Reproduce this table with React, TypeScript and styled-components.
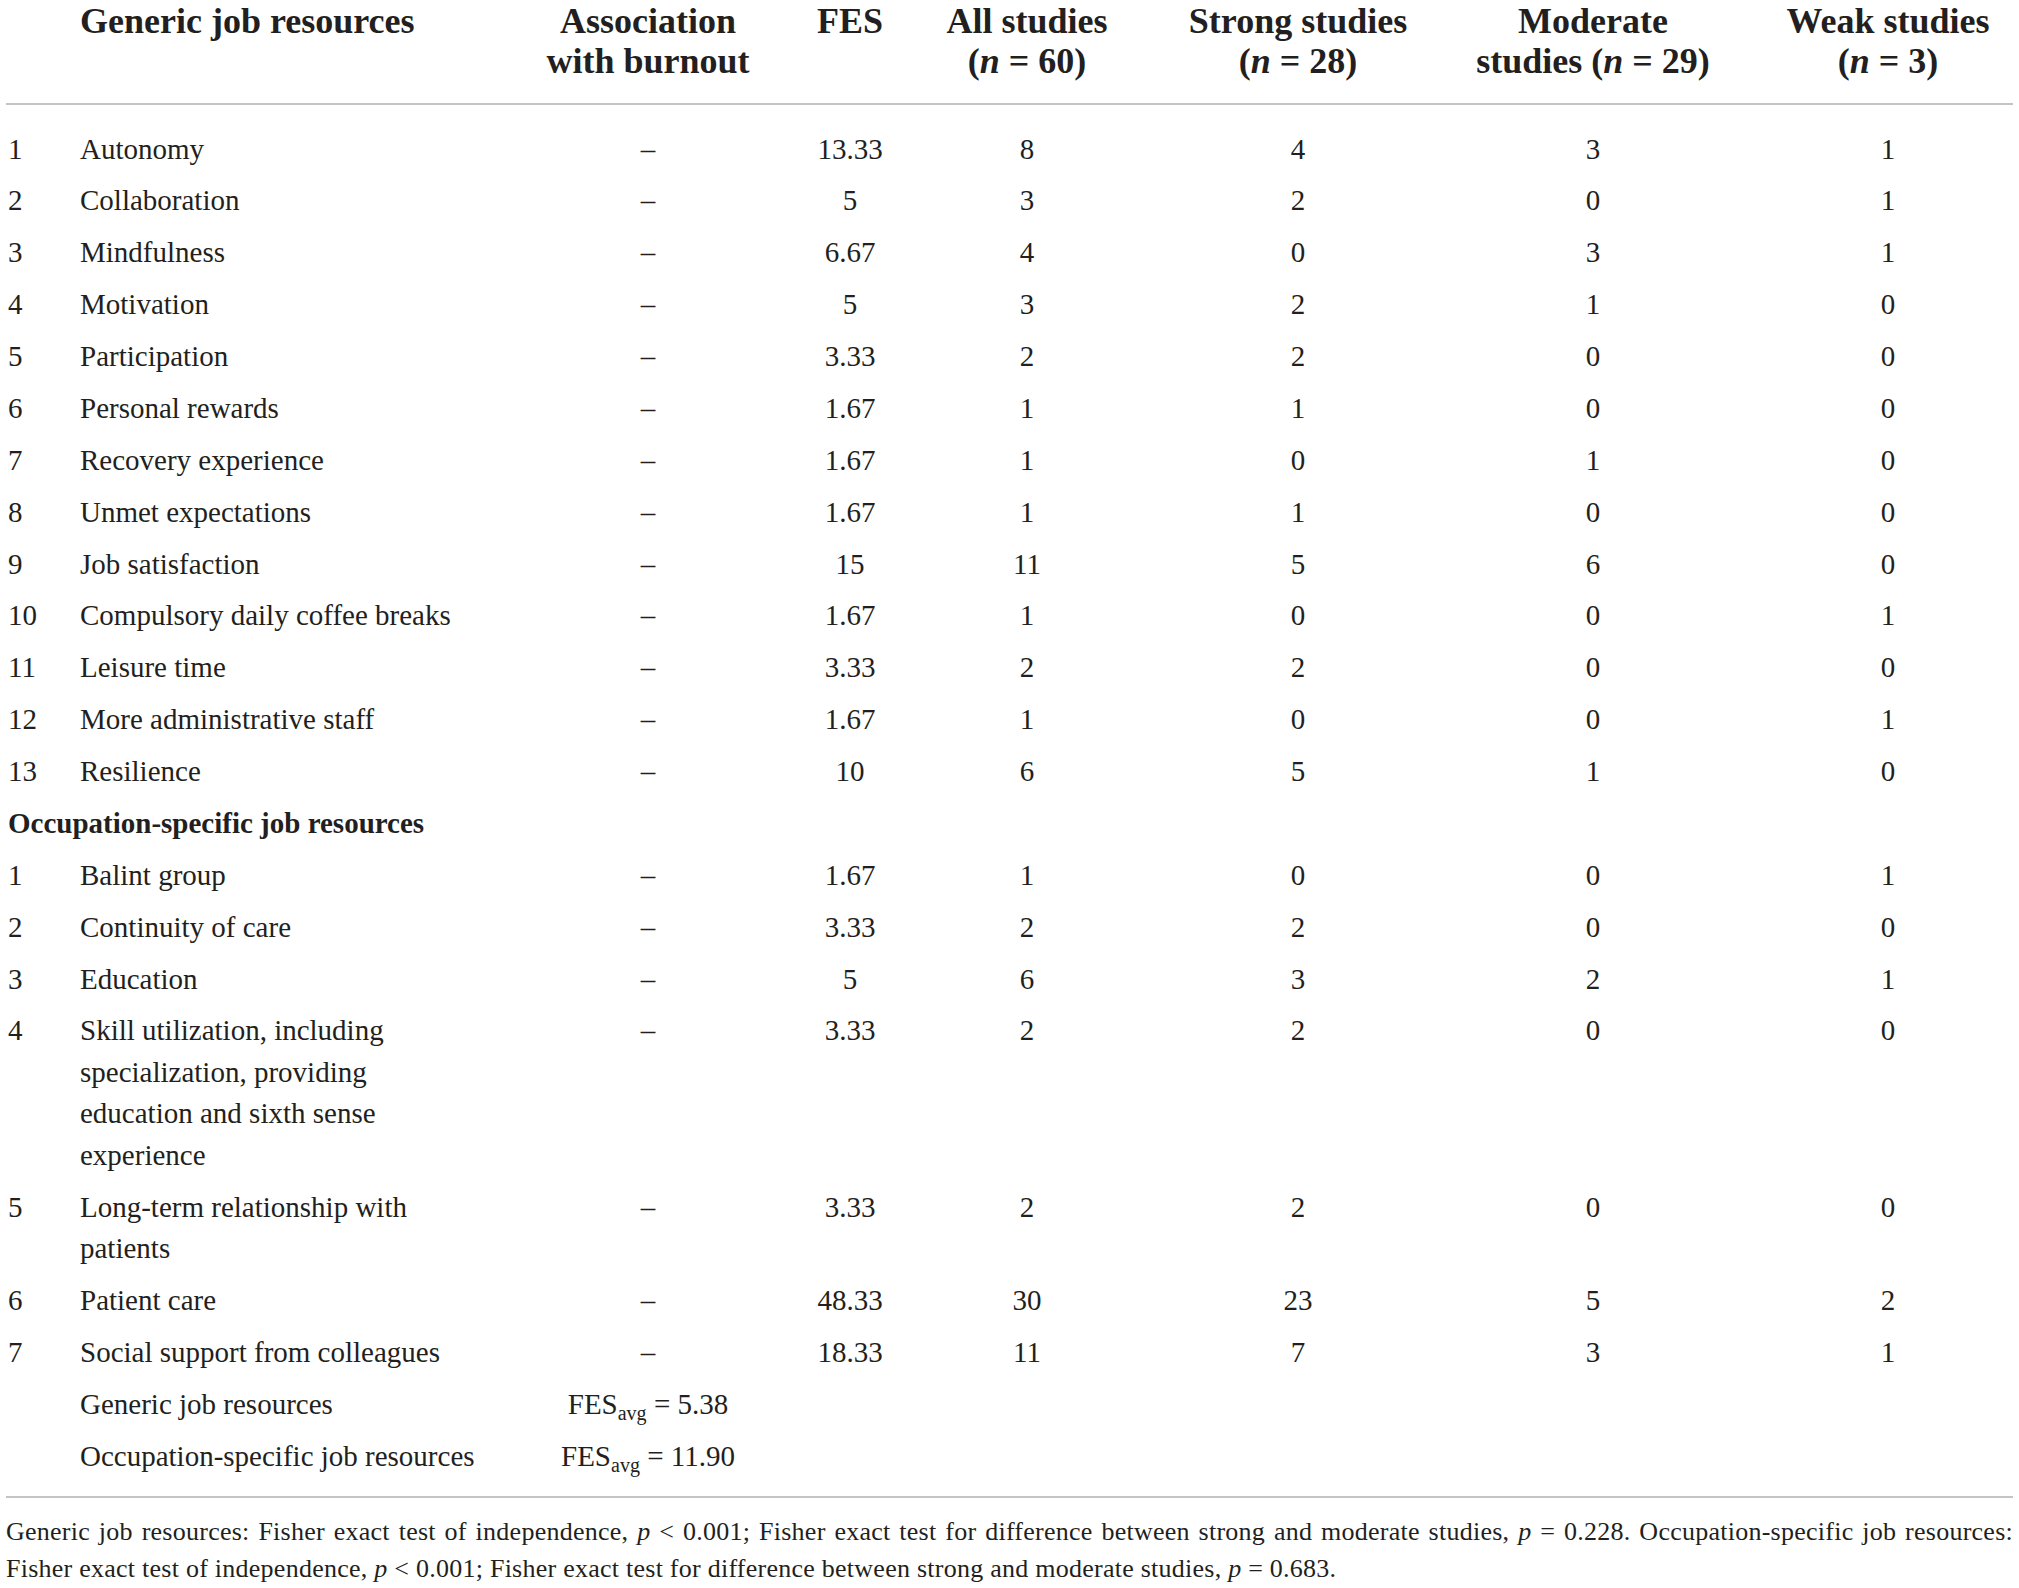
import React from "react";
import styled, { createGlobalStyle } from "styled-components";

type Resource = {
  name: string;
  fes: string;
  counts: number[];
};

const genericResources: Resource[] = [
  { name: "Autonomy", fes: "13.33", counts: [8, 4, 3, 1] },
  { name: "Collaboration", fes: "5", counts: [3, 2, 0, 1] },
  { name: "Mindfulness", fes: "6.67", counts: [4, 0, 3, 1] },
  { name: "Motivation", fes: "5", counts: [3, 2, 1, 0] },
  { name: "Participation", fes: "3.33", counts: [2, 2, 0, 0] },
  { name: "Personal rewards", fes: "1.67", counts: [1, 1, 0, 0] },
  { name: "Recovery experience", fes: "1.67", counts: [1, 0, 1, 0] },
  { name: "Unmet expectations", fes: "1.67", counts: [1, 1, 0, 0] },
  { name: "Job satisfaction", fes: "15", counts: [11, 5, 6, 0] },
  { name: "Compulsory daily coffee breaks", fes: "1.67", counts: [1, 0, 0, 1] },
  { name: "Leisure time", fes: "3.33", counts: [2, 2, 0, 0] },
  { name: "More administrative staff", fes: "1.67", counts: [1, 0, 0, 1] },
  { name: "Resilience", fes: "10", counts: [6, 5, 1, 0] },
];

const occupationResources: Resource[] = [
  { name: "Balint group", fes: "1.67", counts: [1, 0, 0, 1] },
  { name: "Continuity of care", fes: "3.33", counts: [2, 2, 0, 0] },
  { name: "Education", fes: "5", counts: [6, 3, 2, 1] },
  {
    name: "Skill utilization, including specialization, providing education and sixth sense experience",
    fes: "3.33",
    counts: [2, 2, 0, 0],
  },
  { name: "Long-term relationship with patients", fes: "3.33", counts: [2, 2, 0, 0] },
  { name: "Patient care", fes: "48.33", counts: [30, 23, 5, 2] },
  { name: "Social support from colleagues", fes: "18.33", counts: [11, 7, 3, 1] },
];

const averages = [
  { name: "Generic job resources", value: "5.38" },
  { name: "Occupation-specific job resources", value: "11.90" },
];

const columnWidths = [70, 424, 296, 108, 246, 296, 317, 250];

const GlobalStyle = createGlobalStyle`
  html, body {
    margin: 0;
    padding: 0;
    background: #fff;
  }
  body {
    font-family: "Liberation Serif", "Times New Roman", serif;
    color: #231f20;
  }
`;

const Page = styled.div`
  padding-left: 6px;
  width: 2007px;
`;

const Table = styled.table`
  width: 2007px;
  table-layout: fixed;
  border-collapse: collapse;
  font-family: "Liberation Serif", "Times New Roman", serif;
  color: #231f20;

  td:nth-child(1),
  th:nth-child(1) {
    padding-left: 2px;
  }
  td:nth-child(2),
  th:nth-child(2) {
    padding-left: 4px;
    padding-right: 30px;
  }
  td:nth-child(7),
  th:nth-child(7) {
    padding-right: 23px;
  }

  tbody tr:first-child td {
    padding-top: 23.5px;
  }
  tbody tr:last-child td {
    padding-bottom: 19px;
  }
`;

const HeadCell = styled.th<{ $align?: "left" | "center" }>`
  font-size: 36px;
  font-weight: 700;
  line-height: 40px;
  text-align: ${(p) => p.$align ?? "center"};
  vertical-align: top;
  padding: 1px 0 22px;
  border-bottom: 2px solid #c4c4c4;
  white-space: nowrap;
`;

const Cell = styled.td<{ $align?: "left" | "center"; $nowrap?: boolean }>`
  font-size: 29px;
  line-height: 41.5px;
  text-align: ${(p) => p.$align ?? "center"};
  vertical-align: top;
  padding: 5.2px 0;
  white-space: ${(p) => (p.$nowrap ? "nowrap" : "normal")};
`;

const SectionCell = styled(Cell)`
  font-weight: 700;
`;

const N = styled.i`
  font-style: italic;
`;

const Sub = styled.sub`
  font-size: 20px;
  vertical-align: -6px;
  line-height: 0;
`;

const Footnote = styled.p`
  margin: 0;
  border-top: 2px solid #c4c4c4;
  padding-top: 15px;
  font-size: 26px;
  letter-spacing: 0.25px;
  line-height: 37px;
  text-align: justify;
`;

const Em = styled.i`
  font-style: italic;
`;

const ResourceRow = ({ index, item }: { index: number; item: Resource }) => (
  <tr>
    <Cell $align="left">{index + 1}</Cell>
    <Cell $align="left">{item.name}</Cell>
    <Cell>–</Cell>
    <Cell>{item.fes}</Cell>
    {item.counts.map((c, i) => (
      <Cell key={i}>{c}</Cell>
    ))}
  </tr>
);

const App = () => {
  return (
    <Page>
      <GlobalStyle />
      <Table>
        <colgroup>
          {columnWidths.map((w, i) => (
            <col key={i} style={{ width: w }} />
          ))}
        </colgroup>
        <thead>
          <tr>
            <HeadCell $align="left" />
            <HeadCell $align="left">Generic job resources</HeadCell>
            <HeadCell>
              Association
              <br />
              with burnout
            </HeadCell>
            <HeadCell>FES</HeadCell>
            <HeadCell>
              All studies
              <br />(<N>n</N> = 60)
            </HeadCell>
            <HeadCell>
              Strong studies
              <br />(<N>n</N> = 28)
            </HeadCell>
            <HeadCell>
              Moderate
              <br />
              studies (<N>n</N> = 29)
            </HeadCell>
            <HeadCell>
              Weak studies
              <br />(<N>n</N> = 3)
            </HeadCell>
          </tr>
        </thead>
        <tbody>
          {genericResources.map((item, index) => (
            <ResourceRow key={item.name} index={index} item={item} />
          ))}
          <tr>
            <SectionCell $align="left" colSpan={8}>
              Occupation-specific job resources
            </SectionCell>
          </tr>
          {occupationResources.map((item, index) => (
            <ResourceRow key={item.name} index={index} item={item} />
          ))}
          {averages.map((avg) => (
            <tr key={avg.name}>
              <Cell />
              <Cell $align="left" $nowrap>
                {avg.name}
              </Cell>
              <Cell $nowrap>
                FES<Sub>avg</Sub> = {avg.value}
              </Cell>
              <Cell colSpan={5} />
            </tr>
          ))}
        </tbody>
      </Table>
      <Footnote>
        Generic job resources: Fisher exact test of independence, <Em>p</Em> &lt; 0.001; Fisher exact
        test for difference between strong and moderate studies, <Em>p</Em> = 0.228. Occupation-specific
        job resources: Fisher exact test of independence, <Em>p</Em> &lt; 0.001; Fisher exact test for
        difference between strong and moderate studies, <Em>p</Em> = 0.683.
      </Footnote>
    </Page>
  );
};

export default App;
